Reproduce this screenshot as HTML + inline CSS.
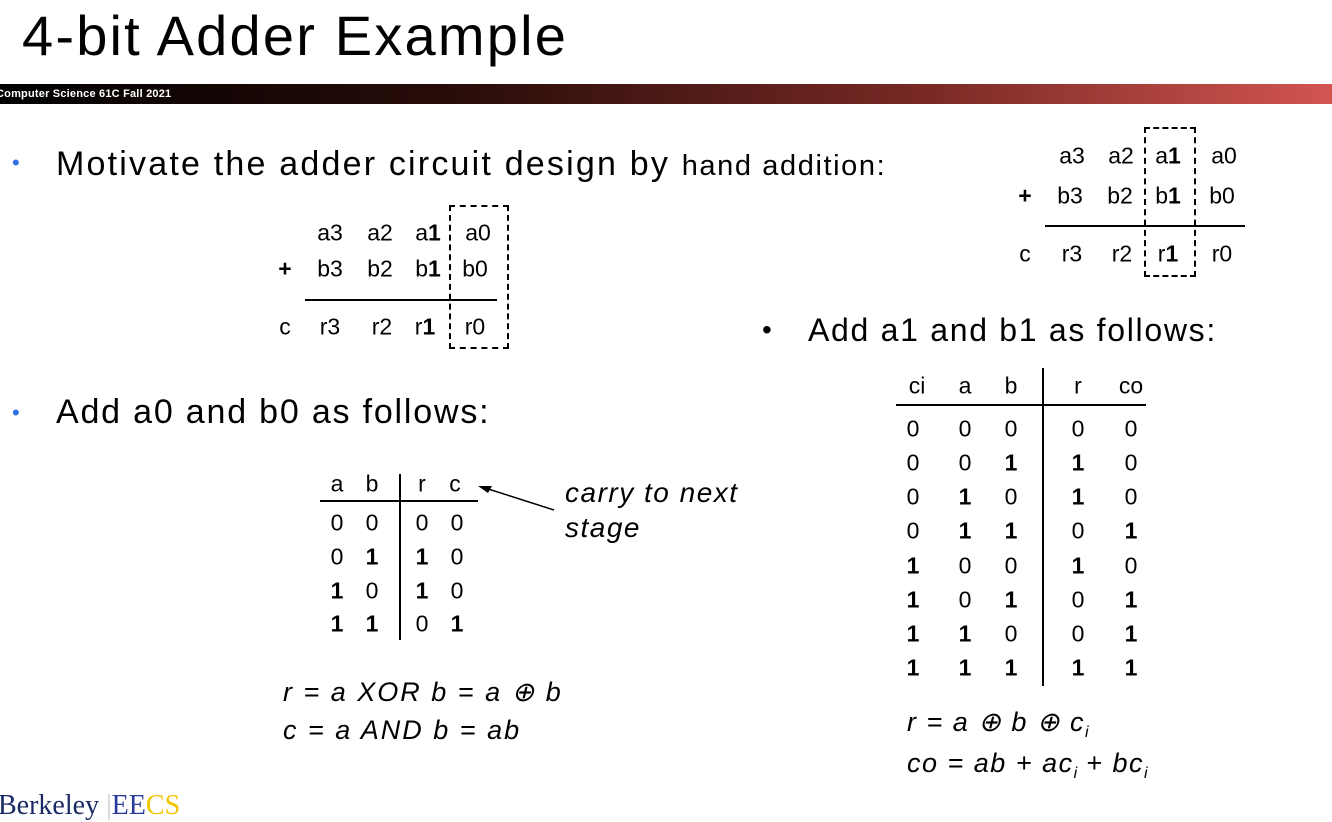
<!DOCTYPE html>
<html><head><meta charset="utf-8"><style>
html,body{margin:0;padding:0;background:#fff}
body{width:1332px;height:798px;position:relative;overflow:hidden;font-family:"Liberation Sans",sans-serif;color:#000}
.a{position:absolute;white-space:nowrap}
.c{position:absolute;transform:translate(-50%,-50%);white-space:nowrap;font-size:23px;line-height:1}
.b{font-weight:bold}
.t{font-size:34px;letter-spacing:1.8px}
.dot{color:#2f6fe0;font-size:22px}
.eq{font-style:italic;font-size:27px;letter-spacing:2px}
.s{font-size:16px;position:relative;top:6px;letter-spacing:0}
</style></head><body>
<div class="a" style="left:22px;top:3px;font-size:56px;letter-spacing:2.2px">4-bit Adder Example</div>
<div class="a" style="left:0;top:84px;width:1332px;height:20px;background:linear-gradient(to right,#000 0%,#2a0d0a 35%,#7a2a25 70%,#d25550 100%)"></div>
<div class="a" style="left:-4px;top:88px;font-size:11px;font-weight:bold;color:#fff;letter-spacing:0.2px">Computer Science 61C Fall 2021</div>

<div class="a dot" style="left:12px;top:150px">•</div>
<div class="a t" style="left:56px;top:145px;letter-spacing:2.2px">Motivate the adder circuit design by <span style="font-size:29px;letter-spacing:1.6px">hand addition:</span></div>
<div class="a dot" style="left:12px;top:400px">•</div>
<div class="a t" style="left:56px;top:393px">Add a0 and b0 as follows:</div>
<div class="a" style="left:762px;top:314px;font-size:28px">•</div>
<div class="a t" style="left:808px;top:312px;font-size:32px;letter-spacing:1.7px">Add a1 and b1 as follows:</div>

<!-- left adder -->
<div class="c" style="left:330px;top:233px">a3</div><div class="c" style="left:380px;top:233px">a2</div><div class="c" style="left:428px;top:233px">a<b>1</b></div><div class="c" style="left:478px;top:233px">a0</div>
<div class="c b" style="left:285px;top:269px">+</div><div class="c" style="left:330px;top:269px">b3</div><div class="c" style="left:380px;top:269px">b2</div><div class="c" style="left:428px;top:269px">b<b>1</b></div><div class="c" style="left:475px;top:269px">b0</div>
<div class="a" style="left:305px;top:299px;width:192px;height:2px;background:#000"></div>
<div class="c" style="left:285px;top:327px">c</div><div class="c" style="left:330px;top:327px">r3</div><div class="c" style="left:382px;top:327px">r2</div><div class="c" style="left:425px;top:327px">r<b>1</b></div><div class="c" style="left:475px;top:327px">r0</div>
<div class="a" style="left:449px;top:205px;width:56px;height:140px;border:2px dashed #000"></div>

<!-- right adder -->
<div class="c" style="left:1072px;top:156px">a3</div><div class="c" style="left:1121px;top:156px">a2</div><div class="c" style="left:1168px;top:156px">a<b>1</b></div><div class="c" style="left:1224px;top:156px">a0</div>
<div class="c b" style="left:1025px;top:196px">+</div><div class="c" style="left:1070px;top:196px">b3</div><div class="c" style="left:1120px;top:196px">b2</div><div class="c" style="left:1168px;top:196px">b<b>1</b></div><div class="c" style="left:1222px;top:196px">b0</div>
<div class="a" style="left:1045px;top:225px;width:200px;height:2px;background:#000"></div>
<div class="c" style="left:1025px;top:254px">c</div><div class="c" style="left:1072px;top:254px">r3</div><div class="c" style="left:1122px;top:254px">r2</div><div class="c" style="left:1168px;top:254px">r<b>1</b></div><div class="c" style="left:1222px;top:254px">r0</div>
<div class="a" style="left:1144px;top:127px;width:48px;height:146px;border:2px dashed #000"></div>

<!-- small table -->
<div class="c" style="left:337px;top:484px">a</div><div class="c" style="left:372px;top:484px">b</div><div class="c" style="left:422px;top:484px">r</div><div class="c" style="left:455px;top:484px">c</div>
<div class="a" style="left:320px;top:500px;width:158px;height:2px;background:#000"></div>
<div class="a" style="left:399px;top:474px;width:2px;height:166px;background:#000"></div>
<div class="c" style="left:337px;top:523px">0</div><div class="c" style="left:372px;top:523px">0</div><div class="c" style="left:422px;top:523px">0</div><div class="c" style="left:457px;top:523px">0</div>
<div class="c" style="left:337px;top:557px">0</div><div class="c b" style="left:372px;top:557px">1</div><div class="c b" style="left:422px;top:557px">1</div><div class="c" style="left:457px;top:557px">0</div>
<div class="c b" style="left:337px;top:591px">1</div><div class="c" style="left:372px;top:591px">0</div><div class="c b" style="left:422px;top:591px">1</div><div class="c" style="left:457px;top:591px">0</div>
<div class="c b" style="left:337px;top:624px">1</div><div class="c b" style="left:372px;top:624px">1</div><div class="c" style="left:422px;top:624px">0</div><div class="c b" style="left:457px;top:624px">1</div>
<svg class="a" style="left:470px;top:478px" width="90" height="40"><line x1="12" y1="9" x2="84" y2="32" stroke="#000" stroke-width="1.5"/><polygon points="8,8 22,8 18,15" fill="#000"/></svg>
<div class="a" style="left:565px;top:475px;font-size:28px;font-style:italic;line-height:35px;letter-spacing:1.5px">carry to next<br>stage</div>
<div class="a eq" style="left:283px;top:673px;line-height:38px">r = a XOR b = a ⊕ b<br>c = a AND b = ab</div>

<!-- big table -->
<div class="c" style="left:917px;top:386px">ci</div><div class="c" style="left:965px;top:386px">a</div><div class="c" style="left:1011px;top:386px">b</div><div class="c" style="left:1078px;top:386px">r</div><div class="c" style="left:1131px;top:386px">co</div>
<div class="a" style="left:896px;top:404px;width:250px;height:2px;background:#000"></div>
<div class="a" style="left:1042px;top:368px;width:2px;height:318px;background:#000"></div>
<div class="c" style="left:913px;top:429px">0</div><div class="c" style="left:965px;top:429px">0</div><div class="c" style="left:1011px;top:429px">0</div><div class="c" style="left:1078px;top:429px">0</div><div class="c" style="left:1131px;top:429px">0</div>
<div class="c" style="left:913px;top:463px">0</div><div class="c" style="left:965px;top:463px">0</div><div class="c b" style="left:1011px;top:463px">1</div><div class="c b" style="left:1078px;top:463px">1</div><div class="c" style="left:1131px;top:463px">0</div>
<div class="c" style="left:913px;top:497px">0</div><div class="c b" style="left:965px;top:497px">1</div><div class="c" style="left:1011px;top:497px">0</div><div class="c b" style="left:1078px;top:497px">1</div><div class="c" style="left:1131px;top:497px">0</div>
<div class="c" style="left:913px;top:531px">0</div><div class="c b" style="left:965px;top:531px">1</div><div class="c b" style="left:1011px;top:531px">1</div><div class="c" style="left:1078px;top:531px">0</div><div class="c b" style="left:1131px;top:531px">1</div>
<div class="c b" style="left:913px;top:566px">1</div><div class="c" style="left:965px;top:566px">0</div><div class="c" style="left:1011px;top:566px">0</div><div class="c b" style="left:1078px;top:566px">1</div><div class="c" style="left:1131px;top:566px">0</div>
<div class="c b" style="left:913px;top:600px">1</div><div class="c" style="left:965px;top:600px">0</div><div class="c b" style="left:1011px;top:600px">1</div><div class="c" style="left:1078px;top:600px">0</div><div class="c b" style="left:1131px;top:600px">1</div>
<div class="c b" style="left:913px;top:634px">1</div><div class="c b" style="left:965px;top:634px">1</div><div class="c" style="left:1011px;top:634px">0</div><div class="c" style="left:1078px;top:634px">0</div><div class="c b" style="left:1131px;top:634px">1</div>
<div class="c b" style="left:913px;top:668px">1</div><div class="c b" style="left:965px;top:668px">1</div><div class="c b" style="left:1011px;top:668px">1</div><div class="c b" style="left:1078px;top:668px">1</div><div class="c b" style="left:1131px;top:668px">1</div>
<div class="a eq" style="left:907px;top:704px;line-height:36px;letter-spacing:1.5px">r = a ⊕ b ⊕ c<span class="s">i</span><br>co = ab + ac<span class="s">i</span> + bc<span class="s">i</span></div>

<div class="a" style="left:-2px;top:790px;font-family:'Liberation Serif',serif;font-size:28px;color:#1a2a66">Berkeley <span style="color:#ccc">|</span><span style="color:#2a3a9a">EE</span><span style="color:#f3c400">CS</span></div>
</body></html>
